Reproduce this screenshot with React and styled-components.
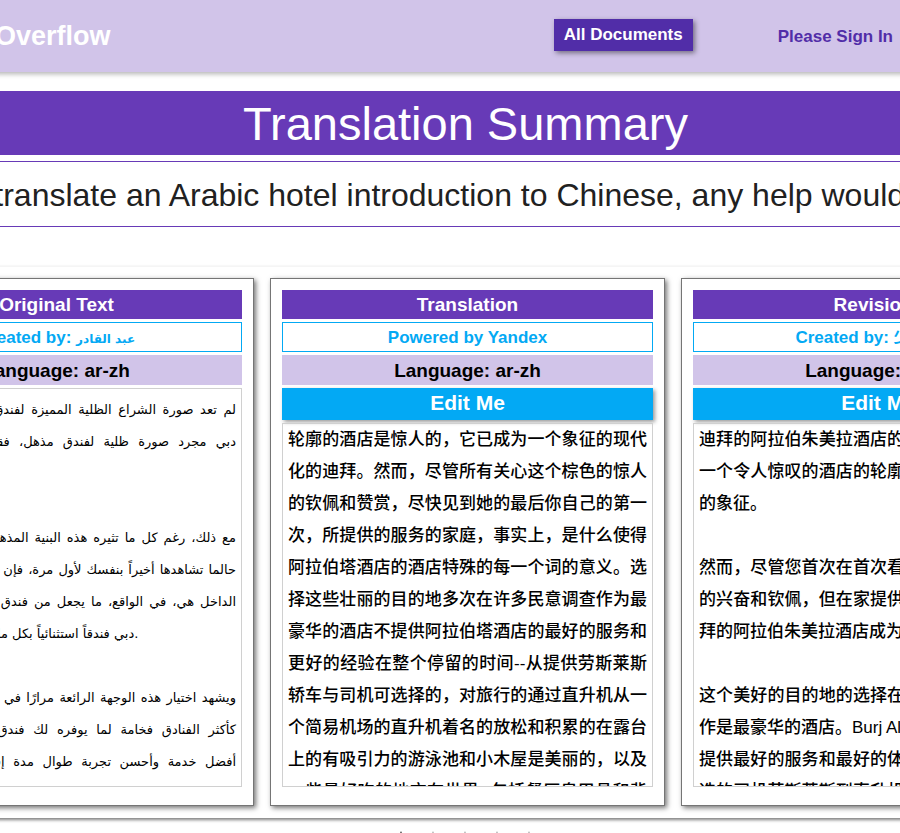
import React from "react";
import styled, { createGlobalStyle } from "styled-components";

const GlobalStyle = createGlobalStyle`
  * { box-sizing: border-box; }
  body {
    margin: 0;
    background: #fff;
    color: #212121;
    font-family: "Liberation Sans", "Noto Sans CJK SC", "DejaVu Sans", sans-serif;
    overflow: hidden;
  }
`;

const Viewport = styled.div`
  height: 100vh;
  overflow: hidden;
`;

const Page = styled.div`
  margin: 0 -188px 0 -153px;
`;

const Header = styled.header`
  display: flex;
  align-items: center;
  height: 72px;
  padding: 0 195px 0 22px;
  background: #d1c4e9;
  box-shadow: 0 2px 5px rgba(0, 0, 0, 0.3);
`;

const Brand = styled.a`
  margin-right: auto;
  color: #fff;
  font-size: 27px;
  font-weight: 700;
  text-decoration: none;
`;

const DocumentsButton = styled.button`
  height: 32px;
  margin: 0 85px 2px 0;
  padding: 0 10px;
  border: 0;
  background: #512da8;
  box-shadow: 2px 2px 5px rgba(0, 0, 0, 0.45);
  color: #fff;
  font-family: inherit;
  font-size: 17px;
  font-weight: 700;
`;

const SignIn = styled.a`
  padding-top: 2px;
  color: #512da8;
  font-size: 17px;
  font-weight: 700;
  text-decoration: none;
`;

const Title = styled.h1`
  margin: 19px 0 6px;
  padding: 2px 4px 0 0;
  background: #673ab7;
  color: #fff;
  font-size: 47px;
  font-weight: 400;
  line-height: 62px;
  text-align: center;
`;

const Question = styled.h2`
  margin: 0 0 39px;
  padding-top: 2px;
  border: solid #673ab7;
  border-width: 1px 0;
  font-size: 32px;
  font-weight: 400;
  line-height: 62px;
  text-align: center;
  white-space: nowrap;
`;

const Board = styled.main`
  display: grid;
  grid-template-columns: repeat(3, minmax(0, 1fr));
  gap: 16px;
  padding: 11px 12px 12px;
  border-top: 1px solid #f5f5f5;
  box-shadow: 0 2px 3px rgba(0, 0, 0, 0.5);
`;

const Card = styled.section`
  display: flex;
  flex-direction: column;
  gap: 3px;
  height: 528px;
  padding: 11px 11px 18px;
  border: 1px solid #757575;
  box-shadow: 2px 2px 5px rgba(0, 0, 0, 0.55);
`;

const CardTitle = styled.h3`
  margin: 0;
  padding-top: 1px;
  background: #673ab7;
  color: #fff;
  font-size: 19px;
  line-height: 28px;
  text-align: center;
`;

const Author = styled.p`
  margin: 0;
  padding-top: 2px;
  border: 1px solid #03a9f4;
  color: #03a9f4;
  font-size: 17px;
  font-weight: 700;
  line-height: 26px;
  text-align: center;
`;

const ArabicName = styled.span`
  font-family: "DejaVu Sans", sans-serif;
  font-size: 12px;
  line-height: 16px;
`;

const Language = styled.p`
  margin: 0;
  padding-top: 2px;
  background: #d1c4e9;
  color: #000;
  font-size: 19px;
  font-weight: 700;
  line-height: 28px;
  text-align: center;
`;

const EditButton = styled.button`
  height: 32px;
  padding: 0 0 2px;
  border: 0;
  background: #03a9f4;
  box-shadow: 2px 2px 4px rgba(0, 0, 0, 0.4);
  color: #fff;
  font-family: inherit;
  font-size: 21px;
  font-weight: 700;
`;

const TextBox = styled.div`
  flex: 1;
  min-height: 0;
  padding: ${({ $arabic }) => ($arabic ? "5px 5px 0" : "0 5px")};
  border: 1px solid #d0d0d0;
  overflow: hidden;
  color: #000;
  font-size: ${({ $arabic }) => ($arabic ? "13px" : "17px")};
  font-weight: ${({ $arabic }) => ($arabic ? 400 : 500)};
  font-family: ${({ $arabic }) =>
    $arabic
      ? '"DejaVu Sans", sans-serif'
      : '"Liberation Sans", "Noto Sans CJK SC", sans-serif'};
`;

const Line = styled.p`
  min-height: 32px;
  margin: 0;
  line-height: 32px;
  white-space: nowrap;
  text-align-last: ${({ $end }) => ($end ? "left" : "justify")};
`;

const Rating = styled.div`
  display: flex;
  justify-content: center;
  margin-top: 11px;
  padding-right: 5px;
`;

const StarButton = styled.button`
  display: flex;
  width: 32px;
  padding: 2px;
  border: 0;
  background: none;
  color: ${({ $first }) => ($first ? "#212121" : "#9e9e9e")};
`;

const cards = [
  {
    title: "Original Text",
    author: (
      <>
        Created by: <ArabicName>عبد القادر</ArabicName>
      </>
    ),
    arabic: true,
    lines: [
      "لم تعد صورة الشراع الظلية المميزة لفندق برج العرب في دبي",
      "دبي مجرد صورة ظلية لفندق مذهل، فقد أصبحت رمزاً هاماً",
      "|لدبي الحديثة",
      "",
      "مع ذلك، رغم كل ما تثيره هذه البنية المذهلة من إعجاب كبير بها",
      "حالما تشاهدها أخيراً بنفسك لأول مرة، فإن الخدمة في هذا الفندق",
      "الداخل هي، في الواقع، ما يجعل من فندق برج العرب جميرا في",
      "|دبي فندقاً استثنائياً بكل ما للكلمة من معناها كلها.",
      "",
      "ويشهد اختيار هذه الوجهة الرائعة مرارًا في استطلاعات الرأي عدة",
      "كأكثر الفنادق فخامة لما يوفره لك فندق برج العرب من كل",
      "أفضل خدمة وأحسن تجربة طوال مدة إقامتك الرائعة فيه مع",
      "بداية من توفير سيارات رولز رويس مع السائق الخاص",
    ],
  },
  {
    title: "Translation",
    author: "Powered by Yandex",
    editable: true,
    lines: [
      "轮廓的酒店是惊人的，它已成为一个象征的现代",
      "化的迪拜。然而，尽管所有关心这个棕色的惊人",
      "的钦佩和赞赏，尽快见到她的最后你自己的第一",
      "次，所提供的服务的家庭，事实上，是什么使得",
      "阿拉伯塔酒店的酒店特殊的每一个词的意义。选",
      "择这些壮丽的目的地多次在许多民意调查作为最",
      "豪华的酒店不提供阿拉伯塔酒店的最好的服务和",
      "更好的经验在整个停留的时间--从提供劳斯莱斯",
      "轿车与司机可选择的，对旅行的通过直升机从一",
      "个简易机场的直升机着名的放松和积累的在露台",
      "上的有吸引力的游泳池和小木屋是美丽的，以及",
      "一些最好吃的地方在世界--包括餐厅皇甲具和背",
    ],
  },
  {
    title: "Revisions",
    author: "Created by: 少杰先生",
    editable: true,
    lines: [
      "迪拜的阿拉伯朱美拉酒店的轮廓不仅仅只是一个",
      "一个令人惊叹的酒店的轮廓，它已成为现代迪拜",
      "|的象征。",
      "",
      "然而，尽管您首次在首次看到这个惊人的建筑时",
      "的兴奋和钦佩，但在家提供的服务实际上就是迪",
      "|拜的阿拉伯朱美拉酒店成为特别的酒店。",
      "",
      "这个美好的目的地的选择在许多民意调查中多次",
      "|作是最豪华的酒店。Burj Al Arab Jumeirah",
      "提供最好的服务和最好的体验，从提供劳斯莱斯",
      "选的司机劳斯莱斯到直升机场的私人直升机旅行",
    ],
  },
];

export default function App() {
  return (
    <Viewport>
      <GlobalStyle />
      <Page>
        <Header>
          <Brand href="#home">Translate Overflow</Brand>
          <DocumentsButton type="button">All Documents</DocumentsButton>
          <SignIn href="#sign-in">Please Sign In</SignIn>
        </Header>
        <Title>Translation Summary</Title>
        <Question>
          Need to translate an Arabic hotel introduction to Chinese, any help
          would be helpful!
        </Question>
        <Board>
          {cards.map((card) => (
            <Card key={card.title}>
              <CardTitle>{card.title}</CardTitle>
              <Author>{card.author}</Author>
              <Language>Language: ar-zh</Language>
              {card.editable && <EditButton type="button">Edit Me</EditButton>}
              <TextBox $arabic={card.arabic}>
                {card.lines.map((line, i) => (
                  <Line key={i} $end={line.startsWith("|")}>
                    {line.replace("|", "")}
                  </Line>
                ))}
              </TextBox>
            </Card>
          ))}
        </Board>
        <Rating>
          {[1, 2, 3, 4, 5].map((n) => (
            <StarButton key={n} type="button" $first={n === 1} aria-label={`Rate ${n}`}>
              <svg viewBox="0 0 28 28" width="28" height="28" fill="currentColor">
                <path d="M14 0l4 10h10l-8 6 3 11-9-7-9 7 3-11-8-6h10z" />
              </svg>
            </StarButton>
          ))}
        </Rating>
      </Page>
    </Viewport>
  );
}
